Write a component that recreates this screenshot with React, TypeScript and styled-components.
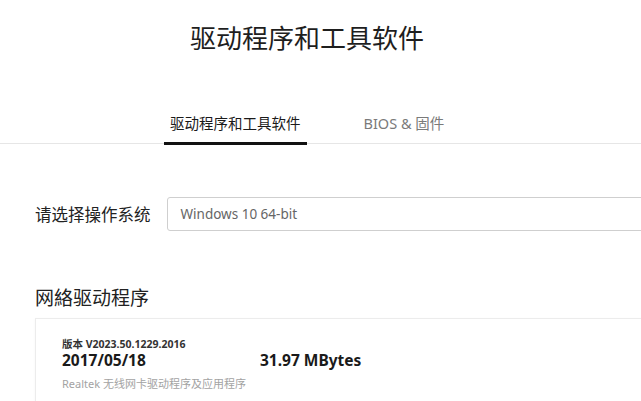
import React from 'react'
import styled, { createGlobalStyle } from 'styled-components'

const GlobalStyle = createGlobalStyle`
  html, body {
    margin: 0;
    padding: 0;
    background: #ffffff;
    overflow: hidden;
  }
  body {
    font-family: "Noto Sans", "Noto Sans CJK SC", sans-serif;
    color: #222;
  }
`

const Page = styled.div`
  width: 641px;
  height: 401px;
  overflow: hidden;
`

const Header = styled.div`
  width: 614px;
  display: flex;
  flex-direction: column;
  align-items: center;
`

const Title = styled.h1`
  margin: 18px 0 0;
  font-size: 26px;
  font-weight: 400;
  line-height: 40px;
  color: #1e1e1e;
`

const TabBar = styled.div`
  width: 641px;
  border-bottom: 1px solid #e6e6e6;
  display: flex;
  justify-content: flex-start;
  margin-top: 54px;
`

const Tabs = styled.div`
  display: flex;
  gap: 51px;
  margin-left: 164px;
`

const Tab = styled.div<{ active?: boolean }>`
  padding: 0 6px 8px;
  font-size: 14.5px;
  line-height: 22px;
  color: ${({ active }) => (active ? '#1a1a1a' : '#7a7a7a')};
  border-bottom: 3px solid ${({ active }) => (active ? '#111' : 'transparent')};
  margin-bottom: -2px;
`

const Body = styled.div`
  padding-left: 35px;
`

const OsRow = styled.div`
  display: flex;
  align-items: center;
  gap: 16px;
  margin-top: 53px;
`

const OsLabel = styled.span`
  font-size: 16.5px;
  color: #222;
  white-space: nowrap;
`

const OsSelect = styled.div`
  flex: none;
  width: 600px;
  height: 34px;
  box-sizing: border-box;
  border: 1px solid #cfcfcf;
  border-radius: 3px;
  padding-left: 13px;
  display: flex;
  align-items: center;
  font-size: 13.5px;
  color: #666;
`

const SectionTitle = styled.h2`
  margin: 53px 0 0;
  font-size: 19px;
  font-weight: 400;
  line-height: 28px;
  color: #222;
`

const Card = styled.div`
  margin-top: 6px;
  width: 640px;
  height: 120px;
  box-sizing: border-box;
  border: 1px solid #ececec;
  box-shadow: 0 1px 3px rgba(0, 0, 0, 0.04);
  padding: 19px 0 0 26px;
`

const Version = styled.div`
  font-size: 10.5px;
  font-weight: 700;
  line-height: 12px;
  color: #333;
`

const MetaRow = styled.div`
  display: flex;
  align-items: baseline;
`

const MetaValue = styled.div<{ w?: number }>`
  width: ${({ w }) => (w ? `${w}px` : 'auto')};
  font-size: 15.5px;
  font-weight: 700;
  line-height: 20px;
  color: #1a1a1a;
`

const Description = styled.div`
  margin-top: 6px;
  font-size: 11px;
  line-height: 16px;
  color: #a3a3a3;
`

export default function App() {
  return (
    <Page>
      <GlobalStyle />
      <Header>
        <Title>驱动程序和工具软件</Title>
      </Header>
      <TabBar>
        <Tabs>
          <Tab active>驱动程序和工具软件</Tab>
          <Tab>BIOS &amp; 固件</Tab>
        </Tabs>
      </TabBar>
      <Body>
        <OsRow>
          <OsLabel>请选择操作系统</OsLabel>
          <OsSelect>Windows 10 64-bit</OsSelect>
        </OsRow>
        <SectionTitle>网絡驱动程序</SectionTitle>
        <Card>
          <Version>版本 V2023.50.1229.2016</Version>
          <MetaRow>
            <MetaValue w={198}>2017/05/18</MetaValue>
            <MetaValue>31.97 MBytes</MetaValue>
          </MetaRow>
          <Description>Realtek 无线网卡驱动程序及应用程序</Description>
        </Card>
      </Body>
    </Page>
  )
}
